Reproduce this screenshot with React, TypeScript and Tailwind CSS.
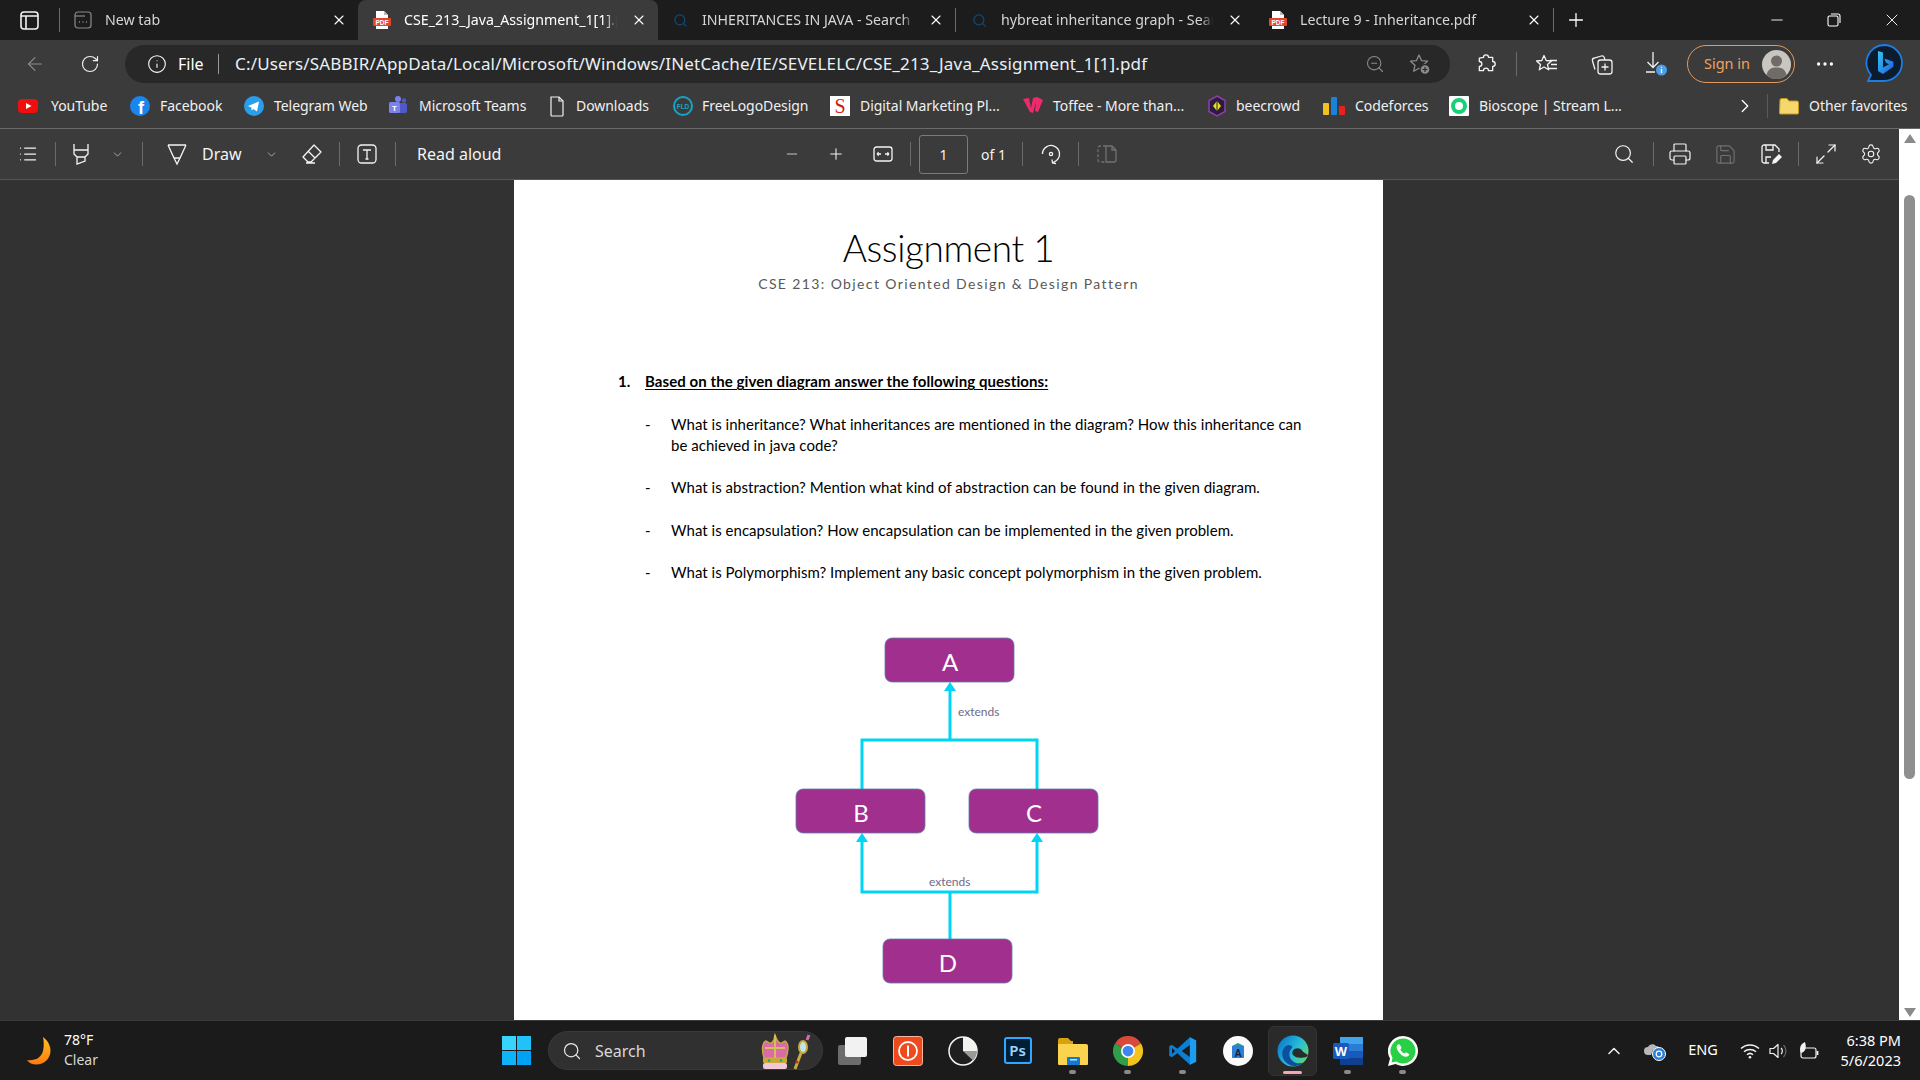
import { ArrowLeft, ChevronDown, ChevronRight, ChevronUp, Info, List, Maximize2, Minus, MoreHorizontal, Plus, Printer, RotateCw, Save, Search, Settings, X, ZoomOut } from "lucide-react";

const PdfIcon = () => (
  <svg width="18" height="20" viewBox="0 0 18 20" className="shrink-0">
    <path d="M3 1h8l4 4v14H3z" fill="#fff" />
    <path d="M11 1l4 4h-4z" fill="#bbb" />
    <rect x="0" y="8" width="18" height="8" rx="1" fill="#e8432e" />
    <text x="9" y="14.5" textAnchor="middle" fontSize="6.5" fontWeight="700" fill="#fff" fontFamily="Liberation Sans">PDF</text>
  </svg>
);

const NewTabIcon = () => (
  <svg width="18" height="18" viewBox="0 0 18 18" fill="none" stroke="#8a8a8a" strokeWidth="1.2" className="shrink-0">
    <rect x="1" y="1" width="16" height="16" rx="3" />
    <path d="M1 5h10" />
    <path d="M5 11h1M8.5 11h1M12 11h1" strokeWidth="1.6" />
  </svg>
);

const Tab = ({ label, icon, active, className }: { label: string; icon: React.ReactNode; active?: boolean; className: string }) => (
  <div className={`flex items-center h-10 shrink-0 pr-[11px] gap-[14px] ${active ? "bg-[#3b3b3b] rounded-t-lg text-white" : "text-[#d6d6d6]"} ${className}`}>
    <div className="w-4 flex justify-center shrink-0">{icon}</div>
    <span className="flex-1 overflow-hidden whitespace-nowrap text-[14.2px] pb-[1px] [mask-image:linear-gradient(to_right,black_calc(100%-12px),transparent)]">{label}</span>
    <X size={16} strokeWidth={1.6} className="text-white shrink-0" />
  </div>
);

const TabBar = () => (
  <div className="flex items-center h-10 bg-[#1c1c1c] shrink-0">
    <div className="w-[59px] flex justify-center">
      <svg width="19" height="19" viewBox="0 0 19 19" fill="none" stroke="#f2f2f2" strokeWidth="1.6">
        <rect x="1" y="1" width="17" height="17" rx="3" />
        <path d="M1 5h17M6 5v13" />
      </svg>
    </div>
    <div className="w-px h-[24px] bg-[#6b6b6b]" />
    <Tab label="New tab" icon={<NewTabIcon />} className="w-[298px] pl-[15px]" />
    <Tab label="CSE_213_Java_Assignment_1[1].pdf" icon={<PdfIcon />} active className="w-[300px] pl-[16px]" />
    <Tab label="INHERITANCES IN JAVA - Search" icon={<Search size={15} className="text-[#0f4a78]" />} className="w-[297px] pl-[14px]" />
    <div className="w-px h-[24px] bg-[#6b6b6b]" />
    <Tab label="hybreat inheritance graph - Search" icon={<Search size={15} className="text-[#0f4a78]" />} className="w-[298px] pl-[15px]" />
    <Tab label="Lecture 9 - Inheritance.pdf" icon={<PdfIcon />} className="w-[299px] pl-[16px]" />
    <div className="w-px h-[24px] bg-[#6b6b6b]" />
    <Plus size={22} strokeWidth={1.4} className="text-white ml-[11px]" />
    <Minus size={18} strokeWidth={1.2} className="text-white ml-[181px]" />
    <svg width="14" height="14" viewBox="0 0 14 14" fill="none" stroke="#fff" strokeWidth="1.1" className="ml-[41px]">
      <rect x="1" y="3" width="10" height="10" rx="1.5" />
      <path d="M4 1h7a2 2 0 0 1 2 2v7" />
    </svg>
    <X size={20} strokeWidth={1.1} className="text-white ml-[41px]" />
  </div>
);

const AddressRow = () => (
  <div className="flex items-center h-12 pt-[5px] pb-[5px] bg-[#3b3b3b] shrink-0 text-white">
    <ArrowLeft size={22} strokeWidth={1.3} className="text-[#8b8b8b] ml-[24px]" />
    <RotateCw size={20} strokeWidth={1.4} className="ml-[34px] text-[#f2f2f2]" />
    <div className="flex items-center w-[1325px] h-[38px] rounded-full bg-[#282828] ml-[25px] pl-[22px] pr-[19px]">
      <Info size={20} strokeWidth={1.3} />
      <span className="ml-[11px] w-[25px] text-[16px] pb-[1px]">File</span>
      <div className="ml-[15px] w-px h-[20px] bg-[#9a9a9a]" />
      <span className="ml-[16px] flex-1 text-[17px] pb-[1px] text-[#e8f1f8] whitespace-nowrap overflow-hidden tracking-[0.17px]">C:/Users/SABBIR/AppData/Local/Microsoft/Windows/INetCache/IE/SEVELELC/CSE_213_Java_Assignment_1[1].pdf</span>
      <ZoomOut size={20} strokeWidth={1.3} className="text-[#8b8b8b]" />
      <svg width="22" height="22" viewBox="0 0 22 22" fill="none" stroke="#8b8b8b" strokeWidth="1.3" className="ml-[24px]">
        <path d="M10 2l2.5 5.6 6 .6-4.500 4 1.300 6-5.300-3-5.300 3 1.300-6-4.500-4 6-.6z" strokeLinejoin="round" />
        <circle cx="16" cy="16.5" r="5" fill="#8b8b8b" stroke="#282828" />
        <path d="M16 14v5M13.500 16.500h5" stroke="#282828" strokeWidth="1.2" />
      </svg>
    </div>
    <svg width="20" height="20" viewBox="0 0 24 24" fill="none" stroke="#f2f2f2" strokeWidth="1.6" className="ml-[26px]">
      <path d="M9 4a3 3 0 0 1 6 0h5v5a3 3 0 0 1 0 6v5h-5a3 3 0 0 0-6 0H4v-5a3 3 0 0 0 0-6V5l5-1z" strokeLinejoin="round" />
    </svg>
    <div className="ml-[20px] w-px h-[24px] bg-[#6b6b6b]" />
    <svg width="22" height="20" viewBox="0 0 22 20" fill="none" stroke="#f2f2f2" strokeWidth="1.3" className="ml-[19px]">
      <path d="M8 1.5l2.2 5 5.3.5-4 3.5 1.2 5.3L8 13l-4.7 2.8 1.2-5.3-4-3.5 5.3-.5z" strokeLinejoin="round" />
      <path d="M14 6.5h7M15 10.5h6M13 14.5h8" />
    </svg>
    <svg width="22" height="22" viewBox="0 0 22 22" fill="none" stroke="#f2f2f2" strokeWidth="1.3" className="ml-[33px]">
      <rect x="7" y="7" width="14" height="14" rx="2.5" />
      <path d="M14 10.5v7M10.5 14h7" />
      <path d="M4 16.5L1.5 8a2.5 2.5 0 0 1 1.8-3l7-2a2.5 2.5 0 0 1 3 1.6L14 7" />
    </svg>
    <svg width="24" height="26" viewBox="0 0 24 26" fill="none" stroke="#f2f2f2" strokeWidth="1.3" className="ml-[31px]">
      <path d="M9 1v15M3.5 11L9 16.5 14.5 11M2 21h9" />
      <circle cx="17.5" cy="19" r="5.5" fill="#4a9fe8" stroke="none" />
      <path d="M17.5 18v4M17.5 15.8v1" stroke="#fff" strokeWidth="1.4" />
    </svg>
    <div className="flex items-center justify-between w-[108px] h-[38px] ml-[19px] pl-[16px] pr-[3px] rounded-full border-[1.5px] border-[#e39a5a] text-[#f0a260] text-[14.5px]">
      <span className="pb-[1px]">Sign in</span>
      <svg width="29" height="29" viewBox="0 0 29 29">
        <circle cx="14.5" cy="14.5" r="14.5" fill="#c9c6c2" />
        <circle cx="14.5" cy="11" r="5.5" fill="#6e6b68" />
        <path d="M4.5 25c1.5-6 5-7.5 10-7.5s8.5 1.5 10 7.5a14 14 0 0 1-20 0z" fill="#6e6b68" />
      </svg>
    </div>
    <MoreHorizontal size={22} strokeWidth={1.6} className="ml-[19px]" />
    <svg width="38" height="40" viewBox="0 0 38 40" className="ml-[29px]">
      <defs>
        <linearGradient id="bingG" x1="0" y1="0" x2="1" y2="1">
          <stop offset="0" stopColor="#36c5f0" />
          <stop offset="1" stopColor="#1a5fe0" />
        </linearGradient>
      </defs>
      <path d="M19 1a18 18 0 0 1 0 36H3l3-6A18 18 0 0 1 19 1z" fill="#0d1b2e" stroke="#1b7ee0" strokeWidth="1.8" />
      <path d="M13 7l5 1.600v15l6-3.400-3-1.400-1.600-4.200 9 3.200v5L18 30l-5-3z" fill="url(#bingG)" />
    </svg>
  </div>
);

const YouTubeLogo = () => (
  <svg width="20" height="18" viewBox="0 0 20 18"><rect y="2" width="20" height="14" rx="4" fill="#f00f0f" /><path d="M8 6l5.5 3L8 12z" fill="#fff" /></svg>
);
const FacebookLogo = () => (
  <svg width="20" height="24" viewBox="0 0 20 24"><circle cx="10" cy="12" r="10" fill="#1a85ee" /><text x="11" y="20" textAnchor="middle" fontSize="18" fontWeight="700" fill="#fff" fontFamily="Liberation Sans">f</text></svg>
);
const TelegramLogo = () => (
  <svg width="20" height="24" viewBox="0 0 20 24"><circle cx="10" cy="12" r="10" fill="#2a9ee8" /><path d="M4 12l11-4.5-2 10-3.5-2.6-1.8 1.6-.4-3z" fill="#fff" /></svg>
);
const TeamsLogo = () => (
  <svg width="20" height="24" viewBox="0 0 20 24">
    <circle cx="10" cy="5" r="3" fill="#7b83eb" /><circle cx="16" cy="6.5" r="2.2" fill="#5059c9" />
    <rect x="8" y="9" width="11" height="10" rx="2" fill="#5059c9" />
    <rect x="1" y="8" width="11" height="11" rx="1.5" fill="#7b83eb" />
    <text x="6.5" y="16.5" textAnchor="middle" fontSize="8" fontWeight="700" fill="#fff" fontFamily="Liberation Sans">T</text>
  </svg>
);
const PageLogo = () => (
  <svg width="16" height="24" viewBox="0 0 16 24" fill="none" stroke="#f2f2f2" strokeWidth="1.2" className="ml-[1px]"><path d="M2 3h8l4 4v14a1 1 0 0 1-1 1H3a1 1 0 0 1-1-1z" /><path d="M10 3v4h4" /></svg>
);
const FldLogo = () => (
  <svg width="20" height="24" viewBox="0 0 20 24"><circle cx="10" cy="12" r="9" fill="none" stroke="#16a5c9" strokeWidth="2" /><text x="10" y="14.5" textAnchor="middle" fontSize="6.5" fontWeight="700" fill="#16a5c9" fontFamily="Liberation Sans">FLD</text></svg>
);
const SLogo = () => (
  <svg width="20" height="24" viewBox="0 0 20 24"><rect y="2" width="20" height="20" fill="#fff" /><text x="10" y="19" textAnchor="middle" fontSize="20" fill="#d01818" fontFamily="Liberation Serif">S</text></svg>
);
const ToffeeLogo = () => (
  <svg width="20" height="20" viewBox="0 0 20 20"><path d="M0 3l6-1 2 10 2-10 4-1 6 3-5 12-3-1 1-9-3 11-3-1z" fill="#ef2a6c" /></svg>
);
const BeeLogo = () => (
  <svg width="18" height="22" viewBox="0 0 18 22"><path d="M9 1l8 4.5v11L9 21l-8-4.5v-11z" fill="#2d1b3d" stroke="#8c3fa8" strokeWidth="1.5" /><path d="M9 6l4 5-4 5-4-5z" fill="#e8e020" /><path d="M9 6v10" stroke="#2d1b3d" /></svg>
);
const CfLogo = () => (
  <svg width="22" height="18" viewBox="0 0 22 18"><rect x="0" y="6" width="6" height="12" rx="1" fill="#f3c11f" /><rect x="8" y="0" width="6" height="18" rx="1" fill="#1a82d8" /><rect x="16" y="9" width="6" height="9" rx="1" fill="#e6231e" /></svg>
);
const BioLogo = () => (
  <svg width="20" height="22" viewBox="0 0 20 22"><rect y="1" width="20" height="20" rx="1" fill="#fff" /><circle cx="10" cy="11" r="6" fill="none" stroke="#19d07a" strokeWidth="4" /></svg>
);

const bookmarks = [
  { label: "YouTube", icon: <YouTubeLogo />, cls: "w-[112px] gap-[13px]" },
  { label: "Facebook", icon: <FacebookLogo />, cls: "w-[114px] gap-[10px]" },
  { label: "Telegram Web", icon: <TelegramLogo />, cls: "w-[144px] gap-[10px]" },
  { label: "Microsoft Teams", icon: <TeamsLogo />, cls: "w-[160px] gap-[11px]" },
  { label: "Downloads", icon: <PageLogo />, cls: "w-[125px] gap-[11px]" },
  { label: "FreeLogoDesign", icon: <FldLogo />, cls: "w-[157px] gap-[9px]" },
  { label: "Digital Marketing Pl...", icon: <SLogo />, cls: "w-[193px] gap-[10px]" },
  { label: "Toffee - More than...", icon: <ToffeeLogo />, cls: "w-[185px] gap-[10px]" },
  { label: "beecrowd", icon: <BeeLogo />, cls: "w-[115px] gap-[10px]" },
  { label: "Codeforces", icon: <CfLogo />, cls: "w-[126px] gap-[10px]" },
  { label: "Bioscope | Stream L...", icon: <BioLogo />, cls: "w-[286px] gap-[10px]" },
];

const BookmarkRow = () => (
  <div className="flex items-center h-[41px] pb-[5px] pl-[18px] bg-[#3b3b3b] border-b border-[#6a6a6a] shrink-0 text-[14px] tracking-[-0.05px] text-[#f0f0f0]">
    {bookmarks.map((b) => (
      <div key={b.label} className={`flex items-center shrink-0 whitespace-nowrap ${b.cls}`}>
        {b.icon}
        <span>{b.label}</span>
      </div>
    ))}
    <ChevronRight size={22} strokeWidth={1.4} className="text-white -ml-[1px]" />
    <div className="ml-[11px] w-px h-[24px] bg-[#5a5a5a]" />
    <svg width="20" height="18" viewBox="0 0 20 18" className="ml-[11px]">
      <path d="M1 3a1.5 1.5 0 0 1 1.5-1.5H8L10 4h8a1.5 1.5 0 0 1 1.5 1.5V16a1 1 0 0 1-1 1h-17a1 1 0 0 1-1-1z" fill="#f5d76e" stroke="#c39a1e" />
    </svg>
    <span className="ml-[10px] whitespace-nowrap">Other favorites</span>
  </div>
);

const Sep = ({ className }: { className: string }) => <div className={`w-px h-[24px] bg-[#6b6b6b] shrink-0 ${className}`} />;

const PdfToolbar = () => (
  <div className="flex items-center h-[51px] bg-[#3b3b3b] border-b border-[#555] shrink-0 text-[#f4f4f4]">
    <List size={20} strokeWidth={1.5} className="ml-[18px]" />
    <Sep className="ml-[17px]" />
    <svg width="20" height="24" viewBox="0 0 20 24" fill="none" stroke="#f4f4f4" strokeWidth="1.3" className="ml-[15px]">
      <path d="M3 2v6h14V2M3 8v4l3 3h8l3-3V8M6 15v7l8-3v-4" />
    </svg>
    <ChevronDown size={13} strokeWidth={1.4} className="ml-[20px] text-[#c8c8c8]" />
    <Sep className="ml-[18px]" />
    <svg width="22" height="24" viewBox="0 0 22 24" fill="none" stroke="#f4f4f4" strokeWidth="1.3" className="ml-[23px]">
      <path d="M2 3h18M2 3l6 13h6l6-13M8 16l3 6 3-6" />
    </svg>
    <span className="ml-[14px] w-[40px] text-[16px]">Draw</span>
    <ChevronDown size={13} strokeWidth={1.4} className="ml-[23px] text-[#c8c8c8]" />
    <svg width="22" height="22" viewBox="0 0 22 22" fill="none" stroke="#f4f4f4" strokeWidth="1.3" className="ml-[23px]">
      <path d="M13 2l7 7-10 10H7l-5-5zM7 8l7 7M5 20h9" strokeLinejoin="round" />
    </svg>
    <Sep className="ml-[16px]" />
    <svg width="20" height="20" viewBox="0 0 20 20" fill="none" stroke="#f4f4f4" strokeWidth="1.3" className="ml-[17px]">
      <rect x="1" y="1" width="18" height="18" rx="3.5" />
      <path d="M6 6h8M10 6v9M8.5 15h3" />
    </svg>
    <Sep className="ml-[18px]" />
    <span className="ml-[21px] w-[85px] text-[16px] whitespace-nowrap">Read aloud</span>
    <Minus size={16} strokeWidth={1.4} className="ml-[282px] text-[#d0d0d0]" />
    <Plus size={18} strokeWidth={1.4} className="ml-[27px]" />
    <svg width="20" height="18" viewBox="0 0 20 18" fill="none" stroke="#f4f4f4" strokeWidth="1.3" className="ml-[28px]">
      <rect x="1" y="2" width="18" height="14" rx="2.5" />
      <path d="M4 9h4M4 9l1.6-1.6M4 9l1.6 1.6M16 9h-4M16 9l-1.6-1.6M16 9l-1.6 1.6" />
    </svg>
    <Sep className="ml-[17px]" />
    <div className="ml-[8px] flex items-center justify-center w-[49px] h-[39px] border border-[#7a7a7a] rounded-[3px] text-[14px]">1</div>
    <span className="ml-[13px] w-[25px] text-[14px] whitespace-nowrap">of 1</span>
    <Sep className="ml-[16px]" />
    <svg width="20" height="24" viewBox="0 0 20 24" fill="none" stroke="#f4f4f4" strokeWidth="1.3" className="ml-[18px]">
      <path d="M1.5 12a8.5 8.5 0 1 1 14 6.5l-4 2.5M11 17.5l.5 3.5 3.5.5" />
      <circle cx="10" cy="12" r="1.6" />
    </svg>
    <Sep className="ml-[17px]" />
    <svg width="20" height="20" viewBox="0 0 20 20" fill="none" stroke="#717171" strokeWidth="1.3" className="ml-[18px]">
      <path d="M9 2H3a2 2 0 0 0-2 2v12a2 2 0 0 0 2 2h6" strokeDasharray="3 2" />
      <path d="M9 2h6l4 4v10a2 2 0 0 1-2 2H9zM15 2v4h4" />
    </svg>
    <Search size={22} strokeWidth={1.3} className="ml-[496px]" />
    <Sep className="ml-[18px]" />
    <Printer size={24} strokeWidth={1.2} className="ml-[14px]" />
    <Save size={23} strokeWidth={1.2} className="ml-[22px] text-[#717171]" />
    <svg width="22" height="22" viewBox="0 0 22 22" fill="none" stroke="#f4f4f4" strokeWidth="1.3" className="ml-[23px]">
      <path d="M9 20H4a2 2 0 0 1-2-2V4a2 2 0 0 1 2-2h11l4 4v3" />
      <path d="M6 2v5h7V2M6 20v-6h5" />
      <path d="M12 21l1-4 6-6 3 3-6 6z" fill="#f4f4f4" stroke="none" />
    </svg>
    <Sep className="ml-[16px]" />
    <Maximize2 size={24} strokeWidth={1.2} className="ml-[15px]" />
    <Settings size={22} strokeWidth={1.2} className="ml-[22px]" />
  </div>
);

const Diagram = () => {
  const line = "#00d5f5";
  const box = (x: number, y: number, label: string) => (
    <g key={label}>
      <rect x={x} y={y} width="129" height="44" rx="7" fill="#a12f8e" stroke="#5b7fa8" strokeWidth="0.8" />
      <text x={x + 65} y={y + 33} textAnchor="middle" fontSize="24" fill="#fff" fontFamily="Lato">{label}</text>
    </g>
  );
  return (
    <svg width="869" height="400" viewBox="514 620 869 400" className="block shrink-0">
      <g fill="none" stroke={line} strokeWidth="3">
        <path d="M950 690V740M862 789V740H1037V789" />
        <path d="M862 842V892H1037V842M950 892V939" />
      </g>
      <g fill={line}>
        <path d="M950 682l6 9h-12z" />
        <path d="M862 833l6 9h-12z" />
        <path d="M1037 833l6 9h-12z" />
      </g>
      {box(885, 638, "A")}
      {box(796, 789, "B")}
      {box(969, 789, "C")}
      {box(883, 939, "D")}
      <g fontSize="12" fill="#6f6a8a" fontFamily="Lato">
        <text x="958" y="716">extends</text>
        <text x="929" y="886">extends</text>
      </g>
    </svg>
  );
};

const PdfPage = () => (
  <div className="flex-1 min-h-0 bg-[#323232] pl-[514px] overflow-hidden">
    <div className="flex flex-col w-[869px] h-full bg-white font-['Lato',sans-serif] text-black overflow-hidden">
      <h1 className="mt-[46px] h-[44px] text-center text-[37px] leading-[44px] font-light tracking-[-0.4px]">Assignment 1</h1>
      <p className="mt-[4px] text-center text-[14px] leading-[20px] text-[#595959] tracking-[1.38px]">CSE 213: Object Oriented Design &amp; Design Pattern</p>
      <div className="mt-[77px] flex pl-[104px] h-[20px] text-[15px] leading-[20px] font-bold tracking-[0.08px]">
        <span className="w-[27px]">1.</span>
        <span className="underline underline-offset-2">Based on the given diagram answer the following questions:</span>
      </div>
      <ul className="mt-[23px] pl-[131px] text-[15px] leading-[21px] tracking-[0.03px]">
        <li className="flex"><span className="w-[26px] shrink-0">-</span><span>What is inheritance? What inheritances are mentioned in the diagram? How this inheritance can<br />be achieved in java code?</span></li>
        <li className="flex mt-[21px]"><span className="w-[26px] shrink-0">-</span><span>What is abstraction? Mention what kind of abstraction can be found in the given diagram.</span></li>
        <li className="flex mt-[22px]"><span className="w-[26px] shrink-0">-</span><span>What is encapsulation? How encapsulation can be implemented in the given problem.</span></li>
        <li className="flex mt-[21px]"><span className="w-[26px] shrink-0">-</span><span>What is Polymorphism? Implement any basic concept polymorphism in the given problem.</span></li>
      </ul>
      <div className="mt-[37px]"><Diagram /></div>
    </div>
  </div>
);

const Scrollbar = () => (
  <div className="flex flex-col items-center w-[21px] bg-white shrink-0 pt-[5px] pb-[3px]">
    <div className="w-0 h-0 border-x-[6px] border-x-transparent border-b-[9px] border-b-[#8a8a8a]" />
    <div className="mt-[52px] w-[11px] h-[584px] rounded-full bg-[#8f8f8f]" />
    <div className="mt-auto w-0 h-0 border-x-[6px] border-x-transparent border-t-[9px] border-t-[#8a8a8a]" />
  </div>
);

const TaskSlot = ({ children, dot, active }: { children: React.ReactNode; dot?: boolean; active?: boolean }) => (
  <div className="relative flex items-center justify-center w-[55px] h-[50px] shrink-0">
    {active && <div className="absolute inset-y-0 left-[3px] right-[3px] bg-[#2a2a2a] border border-[#333] rounded-md" />}
    <div className="relative flex">{children}</div>
    {dot && <div className="absolute bottom-[2px] w-[7px] h-[4px] rounded-full bg-[#8a8a8a]" />}
    {active && <div className="absolute bottom-[2px] w-[19px] h-[3px] rounded-full bg-[#f1a8b4]" />}
  </div>
);

const CrownArt = () => (
  <svg width="58" height="38" viewBox="0 0 58 38">
    <path d="M6 26C3 16 5 10 8 9c3 2 5 4 8-1l1-5 2 5c3 5 5 3 8 1 3 2 4 8 1 17z" fill="#d86ba8" stroke="#c9a83c" strokeWidth="1.5" />
    <path d="M17 3v23M7 16h20" stroke="#d8bd55" strokeWidth="2" />
    <rect x="5" y="26" width="24" height="5" rx="1" fill="#c9a83c" />
    <rect x="5" y="31" width="24" height="6" rx="2" fill="#f0c8d8" />
    <circle cx="11" cy="28.5" r="1.2" fill="#18a080" /><circle cx="23" cy="28.5" r="1.2" fill="#18a080" />
    <path d="M37 37l6-16" stroke="#c9b03c" strokeWidth="3" />
    <ellipse cx="45" cy="15" rx="4" ry="6" fill="#bfe6f0" stroke="#c9a83c" strokeWidth="2" />
    <path d="M49 8l2-5" stroke="#d86ba8" strokeWidth="3" />
    <circle cx="39" cy="30" r="1.5" fill="#d03030" />
  </svg>
);

const EdgeIcon = () => (
  <svg width="32" height="32" viewBox="0 0 32 32">
    <defs>
      <linearGradient id="edgeTop" x1="0" y1="0.2" x2="1" y2="0.8">
        <stop offset="0" stopColor="#0b78cc" />
        <stop offset="0.55" stopColor="#27bdd8" />
        <stop offset="1" stopColor="#67d868" />
      </linearGradient>
    </defs>
    <circle cx="16" cy="16" r="15.5" fill="url(#edgeTop)" />
    <path d="M31 20c-1 3-6 3-10 2.5-4.5-.5-7-4-5-7 2-3 7-3 9 0 1.5 2.3 4 3 6 4.500z" fill="#2a2a2a" />
    <path d="M12 10C6 11 4 17 6 23c2 5 7 8.500 13 8 3-.3 6-1.500 8-3.500-4 1.500-9 1-12-2-3.500-3.500-3.500-9-.5-12 1-1 2-2.500-2.500-3.500z" fill="#0d4f9e" />
  </svg>
);

const Taskbar = () => (
  <div className="flex items-center h-[60px] bg-[#1b1b1b] border-t border-[#3a3a3a] shrink-0 text-white text-[14px]">
    <svg width="26" height="28" viewBox="0 0 26 28" className="ml-[27px]">
      <defs>
        <linearGradient id="moonG" x1="0" y1="0" x2="0" y2="1"><stop offset="0" stopColor="#ffc21e" /><stop offset="1" stopColor="#ff7a10" /></linearGradient>
      </defs>
      <path d="M16 0C24 6 26 16 20 23C14 29 4 29 0 23C8 24 14 21 16 14C17 9 17 4 16 0z" fill="url(#moonG)" />
    </svg>
    <div className="ml-[11px] w-[60px] leading-[20px] pb-[2px]">
      <div>78°F</div>
      <div className="text-[#d8d8d8]">Clear</div>
    </div>
    <div className="grid grid-cols-2 gap-[1.500px] ml-[378px] w-[29px] h-[29px]">
      <div className="bg-[#37d5fc]" /><div className="bg-[#1fc3fa]" />
      <div className="bg-[#10b3f8]" /><div className="bg-[#00a2f5]" />
    </div>
    <div className="flex items-center w-[275px] h-[39px] ml-[17px] pl-[13px] pr-[6px] rounded-full bg-[#303030] border border-[#3a3a3a]">
      <Search size={20} strokeWidth={1.5} className="text-[#e8e8e8]" />
      <span className="ml-[13px] flex-1 text-[16px] text-[#d8d8d8]">Search</span>
      <CrownArt />
    </div>
    <div className="flex ml-[2px]">
      <TaskSlot>
        <div className="relative w-[30px] h-[28px]">
          <div className="absolute left-0 bottom-0 w-[23px] h-[20px] rounded-[2px] bg-[#6c6c6c]" />
          <div className="absolute right-[1px] top-0 w-[22px] h-[20px] rounded-[2px] bg-[#f2f2f2]" />
        </div>
      </TaskSlot>
      <TaskSlot>
        <svg width="30" height="30" viewBox="0 0 30 30" className="ml-[1px]">
          <rect x="0.5" y="0.5" width="29" height="29" rx="3" fill="#ee4a1d" stroke="#f6b9a4" />
          <circle cx="15" cy="15" r="9" fill="none" stroke="#fff" strokeWidth="1.8" />
          <path d="M15 9.500v11" stroke="#fff" strokeWidth="2" />
        </svg>
      </TaskSlot>
      <TaskSlot>
        <svg width="30" height="30" viewBox="0 0 30 30">
          <circle cx="15" cy="15" r="14" fill="#1f1f1f" stroke="#f2f2f2" strokeWidth="1.500" />
          <path d="M15 1a14 14 0 0 1 14 14H15z" fill="#f2f2ee" />
          <path d="M15 15h14a14 14 0 0 1-4 9.500z" fill="#9a9a98" />
        </svg>
      </TaskSlot>
      <TaskSlot>
        <div className="flex items-center justify-center w-[28px] h-[27px] rounded-[3px] bg-[#001e36] border-2 border-[#31a8ff] text-[#9cd6ff] text-[15px] font-semibold leading-none">Ps</div>
      </TaskSlot>
      <TaskSlot dot>
        <svg width="30" height="30" viewBox="0 0 30 30">
          <path d="M0 4a2 2 0 0 1 2-2h8l3 3h2v6H0z" fill="#d9a20c" />
          <path d="M0 8h28a2 2 0 0 1 2 2v18a1 1 0 0 1-1 1H1a1 1 0 0 1-1-1z" fill="#fcd34f" />
          <rect x="9" y="21" width="13" height="8" rx="1" fill="#1278d0" />
          <rect x="12" y="23" width="7" height="1.500" fill="#bfe0f8" />
        </svg>
      </TaskSlot>
      <TaskSlot dot>
        <svg width="30" height="30" viewBox="0 0 24 24">
          <path d="M12 12L1.600 6A12 12 0 0 1 22.400 6z" fill="#da4a3a" />
          <path d="M12 12L22.400 6A12 12 0 0 1 12 24z" fill="#f2c21d" />
          <path d="M12 12L12 24A12 12 0 0 1 1.600 6z" fill="#2f9e48" />
          <circle cx="12" cy="12" r="5.600" fill="#fff" />
          <circle cx="12" cy="12" r="4.300" fill="#3f86f0" />
        </svg>
      </TaskSlot>
      <TaskSlot dot>
        <svg width="30" height="30" viewBox="0 0 24 24">
          <path d="M17.500 1L22.500 3.500V20.500L17.500 23L7.500 13.800L3 17L1 15.800V8.200L3 7L7.500 10.200Z" fill="#0a7fd4" />
          <path d="M17.500 7.200L11 12L17.500 16.800Z" fill="#1b1b1b" />
          <path d="M3.200 9.600V14.400L5.700 12Z" fill="#1b1b1b" />
          <path d="M17.500 1L22.500 3.500V20.500L17.500 23Z" fill="#1f9cf0" />
        </svg>
      </TaskSlot>
      <TaskSlot>
        <svg width="30" height="30" viewBox="0 0 30 30">
          <circle cx="15" cy="15" r="15" fill="#fafafa" />
          <path d="M9 10h12v12H9z" fill="#2f7fd8" />
          <path d="M9 10l6-3 6 3z" fill="#1f9a8a" />
          <text x="15" y="21" textAnchor="middle" fontSize="10" fontWeight="700" fill="#0f1f3f" fontFamily="Liberation Sans">A</text>
        </svg>
      </TaskSlot>
      <TaskSlot active>
        <EdgeIcon />
      </TaskSlot>
      <TaskSlot dot>
        <svg width="30" height="30" viewBox="0 0 30 30">
          <rect x="7" y="1" width="23" height="28" rx="1.500" fill="#2b7cd3" />
          <rect x="7" y="1" width="23" height="7" fill="#41a5ee" />
          <rect x="7" y="15" width="23" height="7" fill="#185abd" />
          <rect x="7" y="22" width="23" height="7" fill="#103f91" />
          <rect x="0" y="7" width="16" height="16" rx="1.500" fill="#185abd" />
          <text x="8" y="20" textAnchor="middle" fontSize="13" fontWeight="700" fill="#fff" fontFamily="Liberation Sans">W</text>
        </svg>
      </TaskSlot>
      <TaskSlot dot>
        <svg width="30" height="30" viewBox="0 0 30 30">
          <path d="M15 0a15 15 0 1 1-7.500 28L0 30l2-7.500A15 15 0 0 1 15 0z" fill="#fff" />
          <path d="M15 2.500a12.500 12.500 0 1 1-6.800 23L3.500 26.500l1-4.700A12.500 12.500 0 0 1 15 2.500z" fill="#27d045" />
          <path d="M10 8.500c-1.500 1-2 3 0 6.500s5 5.500 7.500 5.800c2 .2 3.500-1 3.800-2.500l-3.300-2-1.500 1.300c-1.500-.5-3.500-2.500-4.200-4.200l1.300-1.500-1.800-3.400z" fill="#fff" />
        </svg>
      </TaskSlot>
    </div>
    <ChevronUp size={20} strokeWidth={1.8} className="ml-[174px] text-[#f2f2f2]" />
    <svg width="22" height="20" viewBox="0 0 22 20" className="ml-[20px]">
      <path d="M4 14a4 4 0 0 1 0-8c1-3 6-4 8-1 3 0 4 2 4 4H9l-2 5z" fill="#b8b8b8" />
      <circle cx="15" cy="13" r="6.500" fill="#2a7fd8" stroke="#fff" strokeWidth="1" />
      <circle cx="15" cy="13" r="2.800" fill="none" stroke="#fff" strokeWidth="1.200" />
    </svg>
    <span className="ml-[21px] w-[32px] text-center text-[14.5px] pb-[2px] whitespace-nowrap">ENG</span>
    <svg width="20" height="16" viewBox="0 0 20 16" fill="none" stroke="#f2f2f2" strokeWidth="1.500" className="ml-[21px]">
      <path d="M1 5.500a13 13 0 0 1 18 0M4 8.700a9 9 0 0 1 12 0M7 11.700a4.500 4.500 0 0 1 6 0" />
      <circle cx="10" cy="14.300" r="1.300" fill="#f2f2f2" stroke="none" />
    </svg>
    <svg width="20" height="18" viewBox="0 0 20 18" fill="none" stroke="#f2f2f2" strokeWidth="1.200" className="ml-[9px]">
      <path d="M1 6.500h3.500L9 2.500v13l-4.500-4H1z" strokeLinejoin="round" />
      <path d="M12 6a4 4 0 0 1 0 6" />
      <path d="M14.500 3a8.500 8.500 0 0 1 0 12" stroke="#6a6a6a" />
    </svg>
    <svg width="22" height="20" viewBox="0 0 22 20" fill="none" stroke="#f2f2f2" strokeWidth="1.200" className="ml-[9px]">
      <rect x="3" y="7" width="15" height="10" rx="2" />
      <path d="M19.500 10v4" strokeWidth="1.800" />
      <path d="M7 1C2 3 1 8 3 12c4-1 6-5 4-11z" fill="#f2f2f2" stroke="none" />
    </svg>
    <div className="ml-[1px] w-[80px] text-right text-[14.5px] leading-[20px] pb-[2px] whitespace-nowrap">
      <div>6:38 PM</div>
      <div>5/6/2023</div>
    </div>
  </div>
);

export default function App() {
  return (
    <div className="flex flex-col w-[1920px] h-[1080px] overflow-hidden bg-[#323232] font-['Noto_Sans',sans-serif]">
      <TabBar />
      <AddressRow />
      <BookmarkRow />
      <div className="flex flex-1 min-h-0">
        <div className="flex flex-col w-[1899px] min-h-0">
          <PdfToolbar />
          <PdfPage />
        </div>
        <Scrollbar />
      </div>
      <Taskbar />
    </div>
  );
}
